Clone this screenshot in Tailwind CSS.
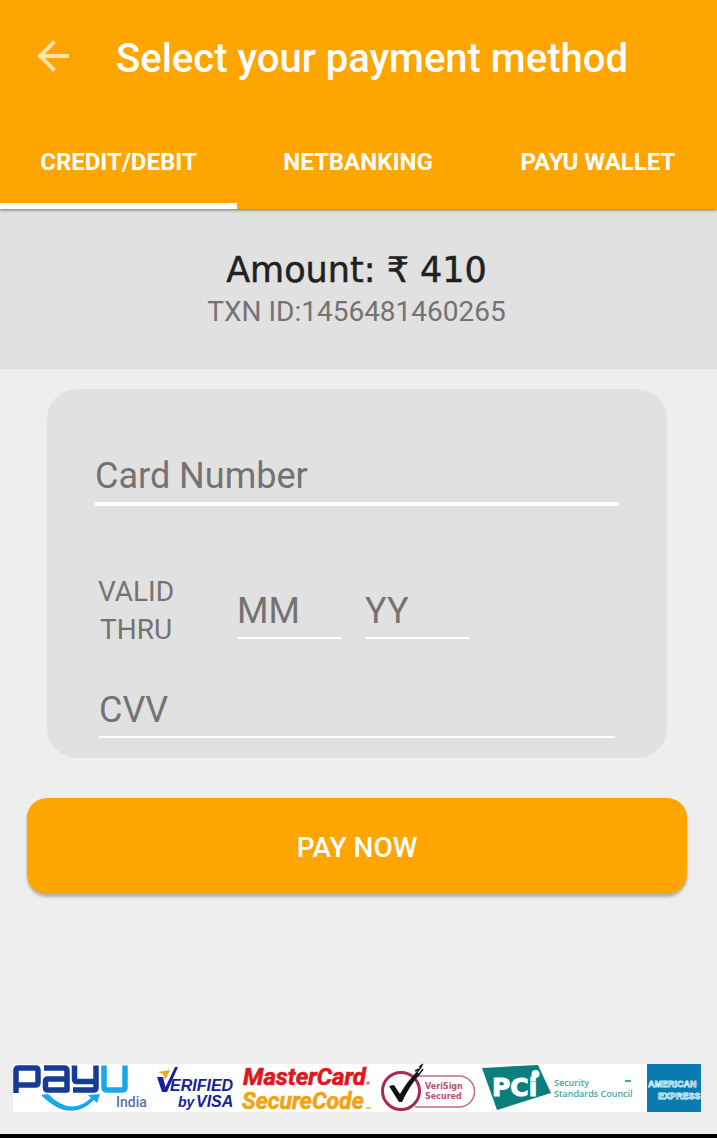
<!DOCTYPE html>
<html lang="en">
<head>
<meta charset="utf-8">
<meta name="viewport" content="width=device-width, initial-scale=1">
<title>Select your payment method</title>
<script src="https://cdn.jsdelivr.net/npm/@tailwindcss/browser@4"></script>
</head>
<body class="flex min-h-screen flex-col bg-[#eeeeee] font-['Roboto',sans-serif] text-[#737373]">
  <header class="relative z-10 bg-[#ffa500] text-white shadow-[0_1px_3px_rgba(0,0,0,0.5)]">
    <div class="flex h-28 items-center gap-8 pl-7">
      <button type="button" aria-label="Back" class="size-12 shrink-0">
        <svg viewBox="0 0 48 48" class="size-12" fill="none" stroke="#ffe1a8" stroke-width="4"><path d="M41 24H12M26.500 9.500L12 24L26.500 38.500"/></svg>
      </button>
      <h1 class="ml-2 pt-1.5 text-[40px] leading-12 font-medium">Select your payment method</h1>
    </div>
    <nav class="grid h-[97px] grid-cols-[237fr_242fr_238fr] text-center text-2xl font-bold">
      <a href="#card" aria-current="page" class="flex items-center justify-center border-b-6 border-white pt-2">CREDIT/DEBIT</a>
      <a href="#netbanking" class="flex items-center justify-center border-b-6 border-transparent pt-2">NETBANKING</a>
      <a href="#wallet" class="flex items-center justify-center border-b-6 border-transparent pt-2">PAYU WALLET</a>
    </nav>
  </header>

  <main class="flex flex-1 flex-col">
    <section class="h-40 bg-[#e1e1e1] pt-[37px] pr-1 text-center">
      <p class="font-['DejaVu_Sans',sans-serif] text-[35px] leading-12 text-[#212121] [-webkit-text-stroke:0.5px_#212121]">Amount: ₹ 410</p>
      <p class="text-[28px] leading-9">TXN ID:1456481460265</p>
    </section>

    <form id="card" class="flex flex-col">
      <div class="mt-5 mr-[50px] ml-[47px] rounded-[30px] bg-[#e1e1e1] px-12 pt-[61px] pb-5">
        <input type="text" aria-label="Card Number" placeholder="Card Number" class="block h-14 w-full border-b-4 border-white text-4xl outline-none placeholder:text-[#737373]">
        <div class="mt-[67px] flex items-start">
          <span class="w-[82px] text-center text-[28px] leading-[38px]">VALID THRU</span>
          <input type="text" aria-label="Expiry month" placeholder="MM" class="mt-3 ml-[60px] h-[54px] w-26 border-b-2 border-white text-4xl outline-none placeholder:text-[#737373]">
          <input type="text" aria-label="Expiry year" placeholder="YY" class="mt-3 ml-6 h-[54px] w-26 border-b-2 border-white text-4xl outline-none placeholder:text-[#737373]">
        </div>
        <div class="mt-[35px] px-1">
          <input type="text" aria-label="CVV" placeholder="CVV" class="block h-[54px] w-full border-b-2 border-white text-4xl outline-none placeholder:text-[#737373]">
        </div>
      </div>
      <button type="submit" class="mt-10 mr-[30px] ml-[27px] h-24 rounded-[20px] bg-[#ffa500] pt-1 text-[28px] font-medium text-white shadow-[0_3px_3px_rgba(0,0,0,0.25)]">PAY NOW</button>
    </form>
  </main>

  <footer class="border-b-4 border-black pr-4 pb-[22px] pl-[13px]">
    <svg viewBox="0 0 688 48" class="block w-full overflow-visible bg-[#fdfefe]" role="img" aria-label="PayU India, Verified by Visa, MasterCard SecureCode, VeriSign Secured, PCI Security Standards Council, American Express">
      <!-- PayU India -->
      <g fill="none" stroke="#173a94" stroke-width="5.500" stroke-linejoin="round">
        <path d="M3 29V6.500Q3 4 5.500 4H22.500Q25 4 25 6.500V18.500Q25 21 22.500 21H5"/>
        <path d="M31 4H51Q54 4 54 7V26H35Q32.500 26 32.500 23.500V17.500Q32.500 15 35 15H53"/>
        <path d="M61.500 1.500V15Q61.500 17.500 64 17.500H83M83 1.500V23.500Q83 26 80.500 26H60"/>
        <path stroke="#18a8ea" d="M91 1.500V23Q91 26 94 26H109Q112 26 112 23V1.500"/>
      </g>
      <path d="M28 31L35 30Q58 53 78 34L75 31L87 30L84 39L81 36Q57 60 28 31Z" fill="#18a8ea"/>
      <text x="103" y="43" font-family="Roboto, sans-serif" font-size="14" font-weight="500" fill="#5a6fb0">India</text>
      <!-- Verified by Visa -->
      <path d="M144 13H150L152.500 23L162 3H165L154 28H149Z" fill="#17219a"/>
      <path d="M145 8L157 6L152 16L150 10Z" fill="#f9a51a"/>
      <g font-family="Liberation Sans, sans-serif" font-weight="700" font-style="italic" fill="#17219a">
        <text x="157" y="27" font-size="16">ERIFIED</text>
        <text x="165" y="43" font-size="14">by</text>
        <text x="183" y="43" font-size="16">VISA</text>
      </g>
      <!-- MasterCard SecureCode -->
      <g font-family="Roboto, sans-serif" font-weight="700" font-style="italic" font-size="24">
        <text x="230" y="21" fill="#df1721" stroke="#df1721" stroke-width="0.600">MasterCard</text>
        <text x="229" y="45" font-size="23" fill="#f4a213" stroke="#f4a213" stroke-width="0.600">SecureCode</text>
      </g>
      <circle cx="355" cy="19" r="1.800" fill="#d8798a"/>
      <path d="M353 44H358" stroke="#f4c36e" stroke-width="2"/>
      <!-- VeriSign Secured -->
      <path d="M404 12H446A15.500 15.500 0 0 1 446 43H402" fill="none" stroke="#c66a86" stroke-width="1.500"/>
      <circle cx="388" cy="27" r="18.500" fill="#fff" stroke="#a82c50" stroke-width="3"/>
      <path d="M376 22L381 21L387 30Q395 16 404 8L407 10Q397 21 389 38H386Z" fill="#111"/>
      <path d="M401 12L409 2M404 13L410 5M402 7L406 5M406 3L410 0" stroke="#222" stroke-width="1.500"/>
      <g font-family="DejaVu Sans, sans-serif" font-size="8" font-weight="700" fill="#b8506f">
        <text x="412" y="25">VeriSign</text>
        <text x="412" y="35">Secured</text>
      </g>
      <!-- PCI Security Standards Council -->
      <path d="M469 4L525 1L538 29L484 46Z" fill="#0b7f7b"/>
      <text x="479" y="32" font-family="DejaVu Sans, sans-serif" font-size="25" font-weight="700" fill="#fff" stroke="#fff">PCi</text>
      <circle cx="522.500" cy="10" r="4" fill="#fff"/>
      <g font-family="Open Sans, sans-serif" font-size="9" font-weight="600" fill="#4ba5a2">
        <text x="541" y="22">Security</text>
        <text x="541" y="33">Standards Council</text>
      </g>
      <path d="M612 17H618" stroke="#4ba5a2" stroke-width="2"/>
      <!-- American Express -->
      <rect x="634" width="54" height="48" fill="#087bb0"/>
      <g font-family="Liberation Sans, sans-serif" font-size="9" font-weight="700" fill="#2a8dbb" stroke="#d5edf6" stroke-width="0.800">
        <text x="635" y="23">AMERICAN</text>
        <text x="645" y="35">EXPRESS</text>
      </g>
    </svg>
  </footer>
</body>
</html>
